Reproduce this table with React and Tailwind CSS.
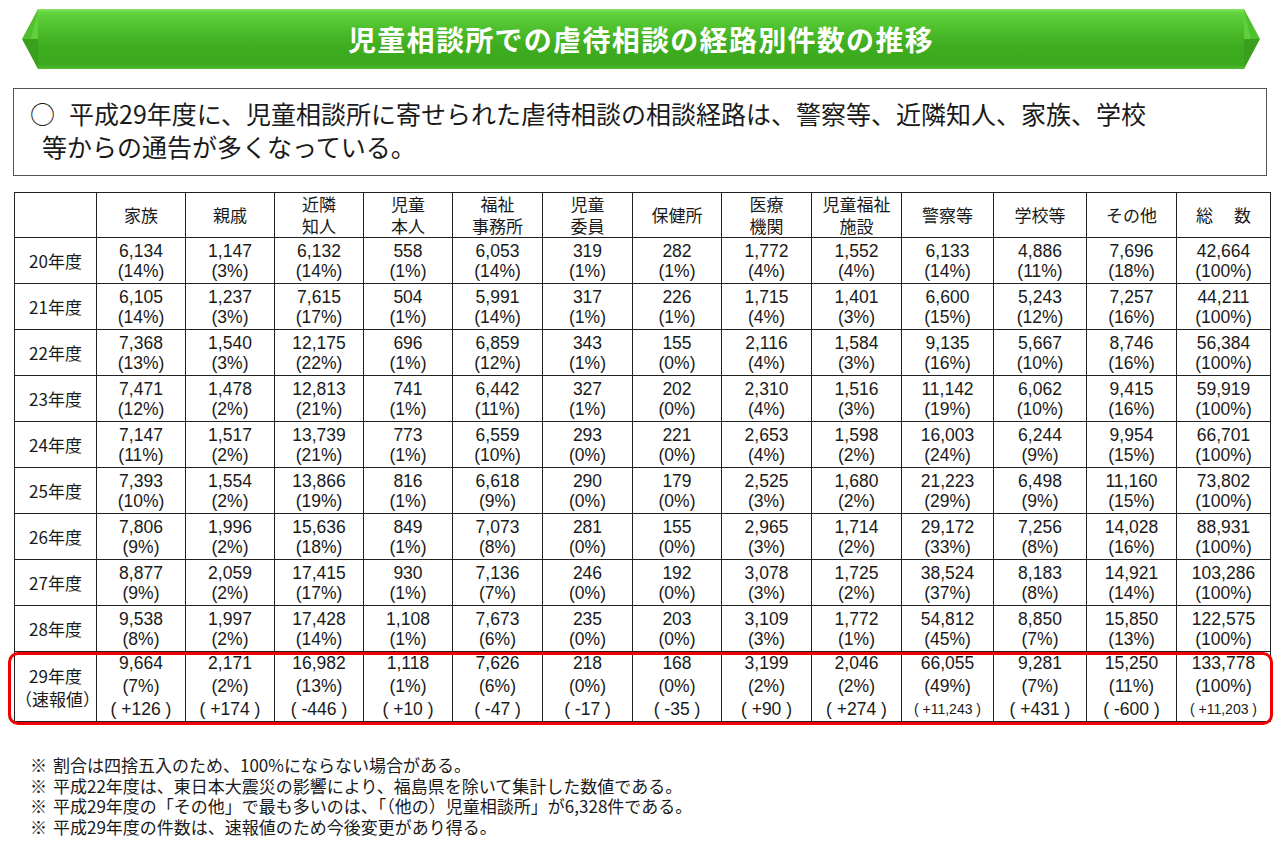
import React from 'react';

const headers = [
  ['家族'],
  ['親戚'],
  ['近隣', '知人'],
  ['児童', '本人'],
  ['福祉', '事務所'],
  ['児童', '委員'],
  ['保健所'],
  ['医療', '機関'],
  ['児童福祉', '施設'],
  ['警察等'],
  ['学校等'],
  ['その他'],
  ['総　 数'],
];

const colWidths = [82, 89, 89, 89, 89, 90, 90, 89, 90, 90, 92, 93, 90, 94];

// [年度, [件数, 割合]...]
const rows = [
  ['20年度', [['6,134', '14%'], ['1,147', '3%'], ['6,132', '14%'], ['558', '1%'], ['6,053', '14%'], ['319', '1%'], ['282', '1%'], ['1,772', '4%'], ['1,552', '4%'], ['6,133', '14%'], ['4,886', '11%'], ['7,696', '18%'], ['42,664', '100%']]],
  ['21年度', [['6,105', '14%'], ['1,237', '3%'], ['7,615', '17%'], ['504', '1%'], ['5,991', '14%'], ['317', '1%'], ['226', '1%'], ['1,715', '4%'], ['1,401', '3%'], ['6,600', '15%'], ['5,243', '12%'], ['7,257', '16%'], ['44,211', '100%']]],
  ['22年度', [['7,368', '13%'], ['1,540', '3%'], ['12,175', '22%'], ['696', '1%'], ['6,859', '12%'], ['343', '1%'], ['155', '0%'], ['2,116', '4%'], ['1,584', '3%'], ['9,135', '16%'], ['5,667', '10%'], ['8,746', '16%'], ['56,384', '100%']]],
  ['23年度', [['7,471', '12%'], ['1,478', '2%'], ['12,813', '21%'], ['741', '1%'], ['6,442', '11%'], ['327', '1%'], ['202', '0%'], ['2,310', '4%'], ['1,516', '3%'], ['11,142', '19%'], ['6,062', '10%'], ['9,415', '16%'], ['59,919', '100%']]],
  ['24年度', [['7,147', '11%'], ['1,517', '2%'], ['13,739', '21%'], ['773', '1%'], ['6,559', '10%'], ['293', '0%'], ['221', '0%'], ['2,653', '4%'], ['1,598', '2%'], ['16,003', '24%'], ['6,244', '9%'], ['9,954', '15%'], ['66,701', '100%']]],
  ['25年度', [['7,393', '10%'], ['1,554', '2%'], ['13,866', '19%'], ['816', '1%'], ['6,618', '9%'], ['290', '0%'], ['179', '0%'], ['2,525', '3%'], ['1,680', '2%'], ['21,223', '29%'], ['6,498', '9%'], ['11,160', '15%'], ['73,802', '100%']]],
  ['26年度', [['7,806', '9%'], ['1,996', '2%'], ['15,636', '18%'], ['849', '1%'], ['7,073', '8%'], ['281', '0%'], ['155', '0%'], ['2,965', '3%'], ['1,714', '2%'], ['29,172', '33%'], ['7,256', '8%'], ['14,028', '16%'], ['88,931', '100%']]],
  ['27年度', [['8,877', '9%'], ['2,059', '2%'], ['17,415', '17%'], ['930', '1%'], ['7,136', '7%'], ['246', '0%'], ['192', '0%'], ['3,078', '3%'], ['1,725', '2%'], ['38,524', '37%'], ['8,183', '8%'], ['14,921', '14%'], ['103,286', '100%']]],
  ['28年度', [['9,538', '8%'], ['1,997', '2%'], ['17,428', '14%'], ['1,108', '1%'], ['7,673', '6%'], ['235', '0%'], ['203', '0%'], ['3,109', '3%'], ['1,772', '1%'], ['54,812', '45%'], ['8,850', '7%'], ['15,850', '13%'], ['122,575', '100%']]],
];

const latest = [
  ['9,664', '7%', '+126'], ['2,171', '2%', '+174'], ['16,982', '13%', '-446'], ['1,118', '1%', '+10'],
  ['7,626', '6%', '-47'], ['218', '0%', '-17'], ['168', '0%', '-35'], ['3,199', '2%', '+90'],
  ['2,046', '2%', '+274'], ['66,055', '49%', '+11,243'], ['9,281', '7%', '+431'], ['15,250', '11%', '-600'],
  ['133,778', '100%', '+11,203'],
];

const notes = [
  '割合は四捨五入のため、100%にならない場合がある。',
  '平成22年度は、東日本大震災の影響により、福島県を除いて集計した数値である。',
  '平成29年度の「その他」で最も多いのは、「（他の）児童相談所」が6,328件である。',
  '平成29年度の件数は、速報値のため今後変更があり得る。',
];

const LeftCap = () => (
  <svg width="16" height="60" viewBox="0 0 16 60" className="block shrink-0">
    <polygon points="16,0 0,30 16,30" fill="#4fbf2e" />
    <polygon points="0,30 16,60 16,30" fill="#3a9f1c" />
    <polygon points="16,0 9,30 16,30" fill="#5fd03c" />
  </svg>
);

const RightCap = () => (
  <svg width="16" height="60" viewBox="0 0 16 60" className="block shrink-0">
    <polygon points="0,0 16,30 0,30" fill="#4fbf2e" />
    <polygon points="16,30 0,60 0,30" fill="#3a9f1c" />
    <polygon points="0,0 7,30 0,30" fill="#5fd03c" />
  </svg>
);

export default function App() {
  return (
    <div className="min-h-screen w-[1280px] bg-white text-[#1a1a1a] font-['Noto_Sans_CJK_JP','Noto_Sans',sans-serif]">
      {/* Title banner */}
      <div className="flex pt-[9px] pl-[22px] pr-[20px]">
        <LeftCap />
        <div className="flex h-[60px] flex-1 items-center justify-center bg-[linear-gradient(to_bottom,#86e862_0%,#62d43e_6%,#4cbd2b_35%,#3fad20_60%,#3ba81d_92%,#52bd33_100%)]">
          <h1 className="text-[28px] font-bold tracking-[1.3px] text-white">児童相談所での虐待相談の経路別件数の推移</h1>
        </div>
        <RightCap />
      </div>

      {/* Summary */}
      <div className="mx-[13px] mt-[19px] h-[88px] border border-[#555] pl-[16px] pt-[8px] text-[25px] leading-[33px]">
        <p>
          <span className="mr-[14px]">○</span>平成29年度に、児童相談所に寄せられた虐待相談の相談経路は、警察等、近隣知人、家族、学校
        </p>
        <p className="pl-[12px]">等からの通告が多くなっている。</p>
      </div>

      {/* Table */}
      <div className="relative mx-[14px] mt-[16px] w-[1256px]">
        <table className="w-full table-fixed border-collapse text-center text-[17px]">
          <colgroup>
            {colWidths.map((w, i) => (
              <col key={i} style={{ width: w }} />
            ))}
          </colgroup>
          <thead>
            <tr className="h-[45px]">
              <th className="border border-[#222] font-normal"></th>
              {headers.map((h, i) => (
                <th key={i} className="border border-[#222] font-normal leading-[22px] whitespace-pre">
                  {h.map((line, j) => (
                    <div key={j}>{line}</div>
                  ))}
                </th>
              ))}
            </tr>
          </thead>
          <tbody>
            {rows.map(([label, cells]) => (
              <tr key={label} className="h-[46px]">
                <td className="border border-[#222]">{label}</td>
                {cells.map(([n, p], i) => (
                  <td key={i} className="border border-[#222] font-['Liberation_Sans',sans-serif] text-[17.5px] leading-[20px]">
                    <div>{n}</div>
                    <div>({p})</div>
                  </td>
                ))}
              </tr>
            ))}
            <tr className="h-[70px]">
              <td className="border border-[#222] leading-[23px]">
                <div>29年度</div>
                <div>（速報値）</div>
              </td>
              {latest.map(([n, p, d], i) => (
                <td key={i} className="border border-[#222] font-['Liberation_Sans',sans-serif] text-[17.5px] leading-[23px]">
                  <div>{n}</div>
                  <div>({p})</div>
                  <div className={d.length > 5 ? 'text-[14px]' : ''}>( {d} )</div>
                </td>
              ))}
            </tr>
          </tbody>
        </table>
        {/* highlight of the latest year */}
        <div className="pointer-events-none absolute bottom-[-3px] left-[-6px] right-[-3px] h-[73px] rounded-[10px] border-[3px] border-[#f00000]"></div>
      </div>

      {/* Notes */}
      <div className="ml-[30px] mt-[33px] text-[17px] leading-[20.5px]">
        {notes.map((n, i) => (
          <div key={i} className="flex">
            <span className="w-[23px] shrink-0">※</span>
            <span>{n}</span>
          </div>
        ))}
      </div>
    </div>
  );
}
